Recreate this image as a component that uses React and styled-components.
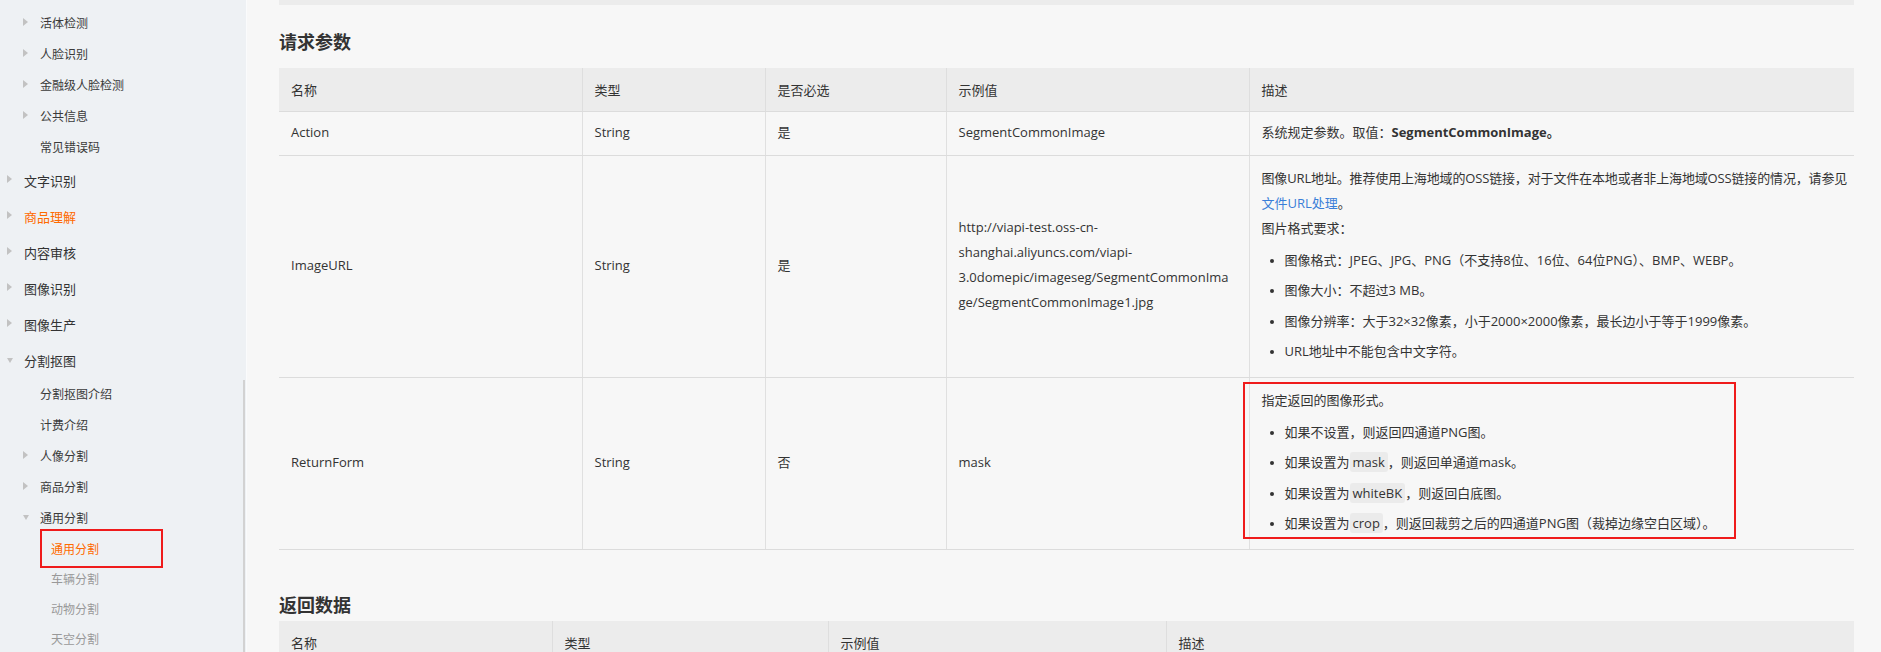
import React from "react";
import styled, { createGlobalStyle, css } from "styled-components";

const GlobalStyle = createGlobalStyle`
  html, body {
    margin: 0;
    padding: 0;
  }
  body {
    background: #f7f7f7;
    color: #333;
    font-family: "Open Sans", "Noto Sans CJK SC", sans-serif;
  }
`;

const Page = styled.div`
  display: flex;
  width: 1881px;
  height: 652px;
  overflow: hidden;
`;

const Sidebar = styled.nav`
  position: relative;
  flex: 0 0 246px;
  background: #eef1f4;
  border-right: 1px solid #fafbfc;
  padding-top: 7px;
  font-family: "Noto Sans CJK SC", sans-serif;
  overflow: hidden;
`;

const ScrollThumb = styled.div`
  position: absolute;
  top: 380px;
  bottom: 0;
  right: 1px;
  width: 2px;
  background: #d2d2d2;
`;

const NavList = styled.ul`
  list-style: none;
  margin: 0;
  padding: 0;
`;

const levelStyles = {
  1: css`
    height: 36px;
    padding-left: 7px;
    font-size: 13px;
    color: #333;
  `,
  2: css`
    height: 31px;
    padding-left: 23px;
    font-size: 12px;
    color: #3a3a3a;
  `,
  3: css`
    height: 30px;
    padding-left: 51px;
    font-size: 12px;
    color: #999;
  `,
};

const NavItem = styled.li`
  position: relative;
  display: flex;
  align-items: center;
  white-space: nowrap;
  ${(p) => levelStyles[p.$level]}
  ${(p) => p.$active && css`color: #ff6a00;`}
  ${(p) =>
    p.$marked &&
    css`
      &::after {
        content: "";
        position: absolute;
        left: 40px;
        top: -4px;
        width: 123px;
        height: 39px;
        box-sizing: border-box;
        border: 2px solid #ef1b1b;
      }
    `}
`;

const Caret = styled.span`
  flex: 0 0 17px;
  display: flex;
  align-items: center;
  height: 100%;
  margin-top: -2px;

  &::before {
    content: "";
    display: ${(p) => (p.$dir ? "block" : "none")};
    width: 0;
    height: 0;
    ${(p) =>
      p.$dir === "down"
        ? css`
            border-top: 5px solid #c2c2c2;
            border-left: 3.5px solid transparent;
            border-right: 3.5px solid transparent;
            margin-top: 2px;
          `
        : css`
            border-left: 5px solid #c2c2c2;
            border-top: 4px solid transparent;
            border-bottom: 4px solid transparent;
          `}
  }
`;

const Main = styled.main`
  flex: 1;
  padding: 0 27px 0 32px;
  min-width: 0;
`;

const TopBar = styled.div`
  height: 5px;
  background: #ececec;
`;

const SectionTitle = styled.h2`
  margin: ${(p) => p.$top}px 0 ${(p) => p.$bottom}px;
  font-size: 18px;
  line-height: 26px;
  font-weight: 700;
  color: #333;
  font-family: "Noto Sans CJK SC", sans-serif;
`;

const Table = styled.table`
  width: 100%;
  table-layout: fixed;
  border-collapse: collapse;
  font-size: 13px;
  color: #333;
`;

const Th = styled.th`
  background: #ececec;
  text-align: left;
  font-weight: 400;
  padding: 11.5px 12px;
  line-height: 20px;
  border-bottom: 1px solid #dcdcdc;
  & + & {
    border-left: 1px solid #dedede;
  }
`;

const Td = styled.td`
  position: relative;
  padding: 10px 12px 13px;
  line-height: ${(p) => (p.$lh ? p.$lh : 20)}px;
  vertical-align: middle;
  border-bottom: 1px solid #dcdcdc;
  & + & {
    border-left: 1px solid #e0e0e0;
  }
  ${(p) =>
    p.$marked &&
    css`
      &::after {
        content: "";
        position: absolute;
        left: -7px;
        top: 4px;
        width: 493px;
        height: 157px;
        box-sizing: border-box;
        border: 2px solid #ef1b1b;
        pointer-events: none;
      }
    `}
`;

const Para = styled.div`
  line-height: 25px;
`;

const NoWrap = styled.span`
  white-space: nowrap;
  letter-spacing: -0.15px;
`;

const DocLink = styled.a`
  color: #3a7ed8;
  text-decoration: none;
`;

const Bullets = styled.ul`
  margin: 0;
  padding: 0 0 1px 23px;
  list-style: disc;
  li {
    margin-top: 6.5px;
    line-height: 24px;
  }
  li::marker {
    font-size: 11px;
  }
`;

const Code = styled.code`
  font-family: inherit;
  font-size: 13px;
  background: #ebebeb;
  border-radius: 3px;
  padding: 1px 3px;
`;

const nav = [
  { label: "活体检测", level: 2, caret: "right" },
  { label: "人脸识别", level: 2, caret: "right" },
  { label: "金融级人脸检测", level: 2, caret: "right" },
  { label: "公共信息", level: 2, caret: "right" },
  { label: "常见错误码", level: 2 },
  { label: "文字识别", level: 1, caret: "right" },
  { label: "商品理解", level: 1, caret: "right", active: true },
  { label: "内容审核", level: 1, caret: "right" },
  { label: "图像识别", level: 1, caret: "right" },
  { label: "图像生产", level: 1, caret: "right" },
  { label: "分割抠图", level: 1, caret: "down" },
  { label: "分割抠图介绍", level: 2 },
  { label: "计费介绍", level: 2 },
  { label: "人像分割", level: 2, caret: "right" },
  { label: "商品分割", level: 2, caret: "right" },
  { label: "通用分割", level: 2, caret: "down" },
  { label: "通用分割", level: 3, active: true, marked: true },
  { label: "车辆分割", level: 3 },
  { label: "动物分割", level: 3 },
  { label: "天空分割", level: 3 },
];

const urlLines = [
  "http://viapi-test.oss-cn-",
  "shanghai.aliyuncs.com/viapi-",
  "3.0domepic/imageseg/SegmentCommonIma",
  "ge/SegmentCommonImage1.jpg",
];

export default function App() {
  return (
    <>
      <GlobalStyle />
      <Page>
        <Sidebar>
          <NavList>
            {nav.map((item, i) => (
              <NavItem
                key={i}
                $level={item.level}
                $active={item.active}
                $marked={item.marked}
              >
                {item.level < 3 && <Caret $dir={item.caret} />}
                {item.label}
              </NavItem>
            ))}
          </NavList>
          <ScrollThumb />
        </Sidebar>

        <Main>
          <TopBar />
          <SectionTitle $top={23} $bottom={14}>请求参数</SectionTitle>
          <Table>
            <colgroup>
              <col style={{ width: 303 }} />
              <col style={{ width: 183 }} />
              <col style={{ width: 181 }} />
              <col style={{ width: 303 }} />
              <col />
            </colgroup>
            <thead>
              <tr>
                <Th>名称</Th>
                <Th>类型</Th>
                <Th>是否必选</Th>
                <Th>示例值</Th>
                <Th>描述</Th>
              </tr>
            </thead>
            <tbody>
              <tr>
                <Td>Action</Td>
                <Td>String</Td>
                <Td>是</Td>
                <Td>SegmentCommonImage</Td>
                <Td>
                  系统规定参数。取值：<b>SegmentCommonImage。</b>
                </Td>
              </tr>
              <tr>
                <Td>ImageURL</Td>
                <Td>String</Td>
                <Td>是</Td>
                <Td $lh={25}>
                  {urlLines.map((l, i) => (
                    <React.Fragment key={i}>
                      {l}
                      {i < urlLines.length - 1 && <br />}
                    </React.Fragment>
                  ))}
                </Td>
                <Td>
                  <Para>
                    <NoWrap>
                      图像URL地址。推荐使用上海地域的OSS链接，对于文件在本地或者非上海地域OSS链接的情况，请参见
                    </NoWrap>
                    <br />
                    <DocLink href="#">文件URL处理</DocLink>。
                    <br />
                    图片格式要求：
                  </Para>
                  <Bullets>
                    <li>图像格式：JPEG、JPG、PNG（不支持8位、16位、64位PNG）、BMP、WEBP。</li>
                    <li>图像大小：不超过3 MB。</li>
                    <li>图像分辨率：大于32×32像素，小于2000×2000像素，最长边小于等于1999像素。</li>
                    <li>URL地址中不能包含中文字符。</li>
                  </Bullets>
                </Td>
              </tr>
              <tr>
                <Td>ReturnForm</Td>
                <Td>String</Td>
                <Td>否</Td>
                <Td>mask</Td>
                <Td $marked>
                  <Para>指定返回的图像形式。</Para>
                  <Bullets>
                    <li>如果不设置，则返回四通道PNG图。</li>
                    <li>
                      如果设置为<Code>mask</Code>，则返回单通道mask。
                    </li>
                    <li>
                      如果设置为<Code>whiteBK</Code>，则返回白底图。
                    </li>
                    <li>
                      如果设置为<Code>crop</Code>，则返回裁剪之后的四通道PNG图（裁掉边缘空白区域）。
                    </li>
                  </Bullets>
                </Td>
              </tr>
            </tbody>
          </Table>

          <SectionTitle $top={41} $bottom={4}>返回数据</SectionTitle>
          <Table>
            <colgroup>
              <col style={{ width: 273 }} />
              <col style={{ width: 276 }} />
              <col style={{ width: 338 }} />
              <col />
            </colgroup>
            <thead>
              <tr>
                <Th>名称</Th>
                <Th>类型</Th>
                <Th>示例值</Th>
                <Th>描述</Th>
              </tr>
            </thead>
          </Table>
        </Main>
      </Page>
    </>
  );
}
